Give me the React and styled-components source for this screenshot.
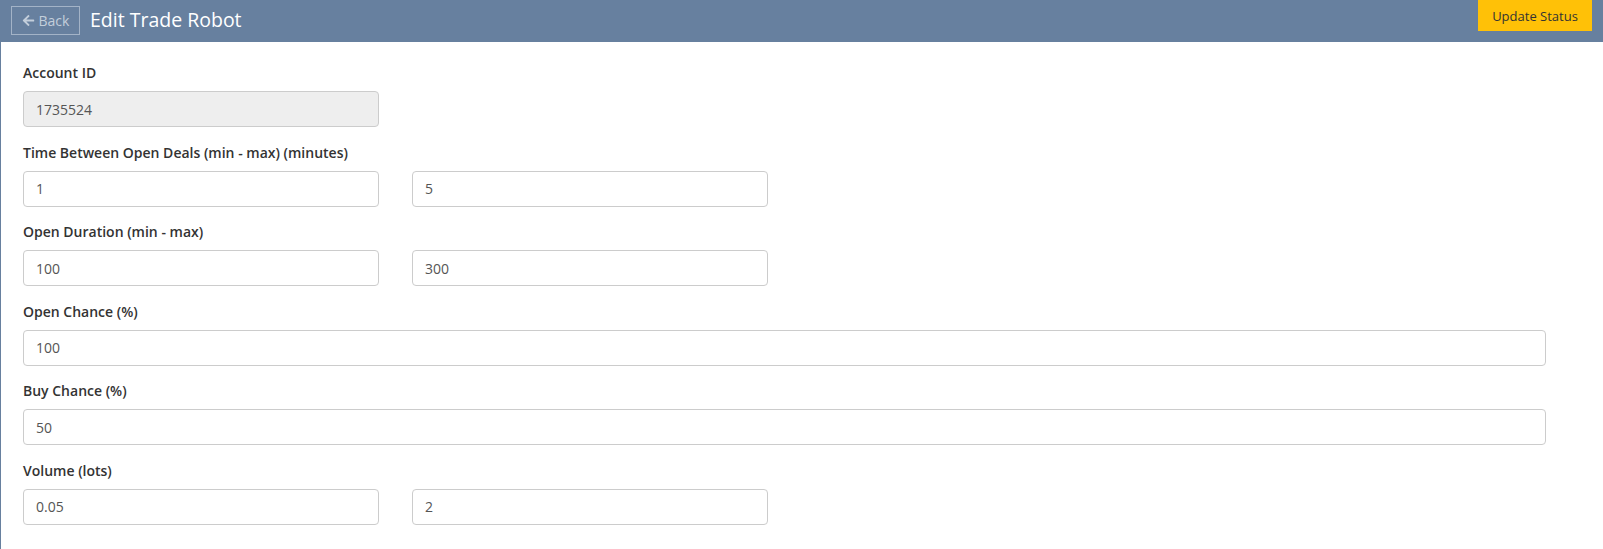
import React from "react";
import styled, { createGlobalStyle } from "styled-components";

const Global = createGlobalStyle`
  html, body { margin: 0; padding: 0; background: #fff; }
  body { font-family: "Open Sans", "Noto Sans", sans-serif; color: #333; }
  * { box-sizing: border-box; }
`;

const Page = styled.div`
  min-height: 549px;
  border-left: 1px solid #67809f;
`;

const Header = styled.header`
  height: 42px;
  background: #67809f;
  display: flex;
  align-items: flex-start;
  margin-left: -1px;
  padding-left: 11px;
`;

const BackButton = styled.button`
  margin-top: 6px;
  height: 29px;
  width: 69px;
  display: flex;
  align-items: center;
  justify-content: center;
  gap: 4px;
  background: transparent;
  border: 1px solid #a3b3c7;
  color: #c3cedb;
  font-family: inherit;
  font-size: 14px;
  padding: 0 8px;
  cursor: pointer;
`;

const Title = styled.h1`
  margin: 0 0 0 10px;
  font-size: 19.5px;
  font-weight: 400;
  color: #fff;
  line-height: 40px;
  flex: 1;
`;

const StatusButton = styled.button`
  margin-right: 11px;
  height: 31px;
  width: 114px;
  background: #ffc107;
  border: none;
  color: #333;
  font-family: inherit;
  font-size: 13px;
  padding: 0;
  cursor: pointer;
`;

const Form = styled.form`
  padding: 21px 57px 0 22px;
  display: flex;
  flex-direction: column;
  gap: 15.6px;
`;

const Group = styled.div`
  display: flex;
  flex-direction: column;
`;

const Label = styled.label`
  font-weight: 600;
  font-size: 14px;
  line-height: 20px;
  margin-bottom: 8px;
  color: #333;
`;

const Pair = styled.div`
  display: grid;
  grid-template-columns: 356px 356px;
  column-gap: 33px;
`;

const Input = styled.input`
  width: ${(p) => (p.$half ? "356px" : "100%")};
  height: 36px;
  padding: 6px 12px;
  border: 1px solid #ccc;
  border-radius: 4px;
  font-family: inherit;
  font-size: 14px;
  color: #555;
  background: ${(p) => (p.disabled ? "#eee" : "#fff")};
  outline: none;
`;

const ArrowIcon = () => (
  <svg width="13" height="13" viewBox="0 0 448 512" fill="currentColor">
    <path d="M257.5 445.1l-22.2 22.2c-9.4 9.4-24.6 9.4-33.9 0L7 273c-9.4-9.4-9.4-24.6 0-33.9L201.4 44.7c9.4-9.4 24.6-9.4 33.9 0l22.2 22.2c9.5 9.5 9.3 25-.4 34.3L136.6 216H424c13.3 0 24 10.7 24 24v32c0 13.3-10.7 24-24 24H136.6l120.5 114.8c9.8 9.3 10 24.8.4 34.3z" />
  </svg>
);

const fields = [
  { label: "Account ID", values: ["1735524"], single: true, disabled: true },
  { label: "Time Between Open Deals (min - max) (minutes)", values: ["1", "5"] },
  { label: "Open Duration (min - max)", values: ["100", "300"] },
  { label: "Open Chance (%)", values: ["100"] },
  { label: "Buy Chance (%)", values: ["50"] },
  { label: "Volume (lots)", values: ["0.05", "2"] },
];

export default function App() {
  return (
    <Page>
      <Global />
      <Header>
        <BackButton type="button">
          <ArrowIcon />
          Back
        </BackButton>
        <Title>Edit Trade Robot</Title>
        <StatusButton type="button">Update Status</StatusButton>
      </Header>
      <Form onSubmit={(e) => e.preventDefault()}>
        {fields.map((f) => (
          <Group key={f.label}>
            <Label>{f.label}</Label>
            {f.values.length === 2 ? (
              <Pair>
                {f.values.map((v, i) => (
                  <Input key={i} $half defaultValue={v} />
                ))}
              </Pair>
            ) : (
              <Input
                $half={f.single}
                defaultValue={f.values[0]}
                disabled={f.disabled}
              />
            )}
          </Group>
        ))}
      </Form>
    </Page>
  );
}
